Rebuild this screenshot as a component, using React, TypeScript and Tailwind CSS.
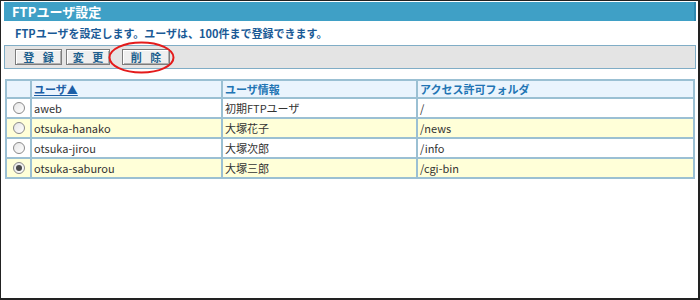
import React from "react";

interface FtpUser {
  name: string;
  info: string;
  folder: string;
  checked?: boolean;
}

const users: FtpUser[] = [
  { name: "aweb", info: "初期FTPユーザ", folder: "/" },
  { name: "otsuka-hanako", info: "大塚花子", folder: "/news" },
  { name: "otsuka-jirou", info: "大塚次郎", folder: "/info" },
  { name: "otsuka-saburou", info: "大塚三郎", folder: "/cgi-bin", checked: true },
];

const Radio = ({ checked }: { checked?: boolean }) => (
  <span className="flex items-center justify-center w-[12px] h-[12px] rounded-full border border-[#8a8a8a] bg-gradient-to-br from-[#e6e6e6] to-white">
    {checked && <span className="w-[6px] h-[6px] rounded-full bg-[#4a4a4a]" />}
  </span>
);

const ToolButton = ({ label, width }: { label: string; width: string }) => (
  <button
    className={`${width} h-[16px] flex items-center justify-center bg-[#efefef] border border-[#7c7c7c] shadow-[inset_1px_1px_0_#ffffff,inset_-1px_-1px_0_#b0b0b0] text-[11px] leading-none font-bold text-[#205f8e] tracking-[3px] pl-[3px]`}
  >
    {label}
  </button>
);

export default function App() {
  const cell = "border-2 border-[#9bc0d3] px-[2px]";

  return (
    <div
      className="relative w-[700px] h-[300px] bg-white border-l border-t border-r-2 border-b-2 border-[#222] pl-[3px] pr-[2px] pt-[1px]"
      style={{ fontFamily: '"Noto Sans CJK JP", "Noto Sans", sans-serif' }}
    >
      {/* title bar */}
      <div className="h-[19px] flex items-center pl-[8px] bg-[#3fa0c6] border-r-2 border-[#2e88b0] text-white text-[13px] font-bold leading-none">
        FTPユーザ設定
      </div>

      {/* description */}
      <div className="h-[24px] flex items-center pl-[11px] text-[11px] font-bold text-[#1a5a96] leading-none">
        FTPユーザを設定します。ユーザは、100件まで登録できます。
      </div>

      {/* toolbar */}
      <div className="h-[24px] flex items-center gap-[4px] pl-[10px] bg-[#e4e4e4] border border-[#80adc6]">
        <ToolButton label="登 録" width="w-[47px]" />
        <ToolButton label="変 更" width="w-[44px]" />
        <div className="w-[4px]" />
        <ToolButton label="削 除" width="w-[48px]" />
      </div>

      {/* table */}
      <table className="mt-[10px] ml-[1px] w-[690px] border-collapse table-fixed text-[11px] leading-none">
        <colgroup>
          <col className="w-[25px]" />
          <col className="w-[191px]" />
          <col className="w-[195px]" />
          <col />
        </colgroup>
        <thead>
          <tr className="h-[18px] bg-[#eaf4fd] text-left font-bold text-[#2274b4]">
            <th className={cell} />
            <th className={cell}>
              <span className="underline text-[#1c5fa6]">ユーザ▲</span>
            </th>
            <th className={cell}>ユーザ情報</th>
            <th className={cell}>アクセス許可フォルダ</th>
          </tr>
        </thead>
        <tbody className="text-[#333]">
          {users.map((u, i) => (
            <tr key={u.name} className={`h-[20px] ${i % 2 === 1 ? "bg-[#ffffd8]" : "bg-white"}`}>
              <td className={cell}>
                <div className="flex justify-center pl-[1px]">
                  <Radio checked={u.checked} />
                </div>
              </td>
              <td className={cell}>{u.name}</td>
              <td className={cell}>{u.info}</td>
              <td className={cell}>{u.folder}</td>
            </tr>
          ))}
        </tbody>
      </table>

      {/* red annotation around 削除 */}
      <svg className="absolute left-[107px] top-[40px] pointer-events-none" width="67" height="33" viewBox="0 0 67 33">
        <ellipse cx="33.5" cy="16.5" rx="32" ry="15" fill="none" stroke="#e41b1b" strokeWidth="2" />
      </svg>
    </div>
  );
}
